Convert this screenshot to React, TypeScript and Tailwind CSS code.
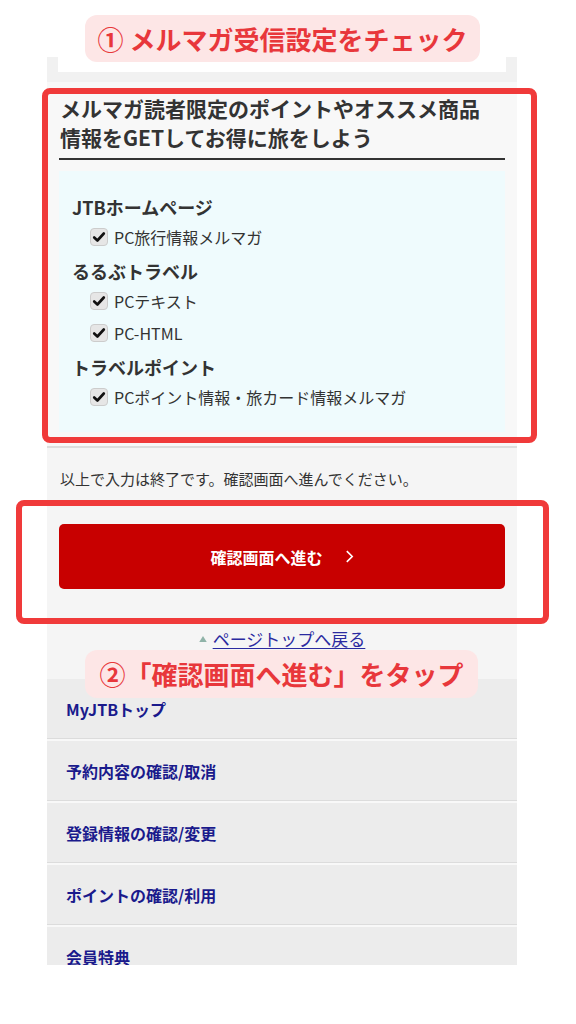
import React from 'react';

const jp = { fontFamily: '"Noto Sans CJK JP", "Noto Sans", sans-serif' };

function CheckBox() {
  return (
    <span className="w-[18px] h-[18px] rounded-[4px] bg-[#e6e6e6] border border-[#cccccc] flex items-center justify-center shrink-0">
      <svg viewBox="0 0 16 16" className="w-[14px] h-[14px]">
        <path d="M2.5 8.5 L6.2 12 L13.5 4" fill="none" stroke="#111" strokeWidth="3" strokeLinecap="round" strokeLinejoin="round" />
      </svg>
    </span>
  );
}

function CheckRow({ label }: { label: string }) {
  return (
    <div className="h-[32px] flex items-center gap-[6px] pl-[18px]">
      <CheckBox />
      <span className="text-[16px] leading-[20px] text-[#333]">{label}</span>
    </div>
  );
}

const groups = [
  { title: 'JTBホームページ', items: ['PC旅行情報メルマガ'] },
  { title: 'るるぶトラベル', items: ['PCテキスト', 'PC-HTML'] },
  { title: 'トラベルポイント', items: ['PCポイント情報・旅カード情報メルマガ'] },
];

const navItems = ['MyJTBトップ', '予約内容の確認/取消', '登録情報の確認/変更', 'ポイントの確認/利用', '会員特典'];

export default function App() {
  return (
    <div className="relative w-[576px] h-[1024px] bg-white overflow-hidden" style={jp}>
      <div className="ml-[47px] w-[470px] flex flex-col">
        {/* bottom edge of previous card */}
        <div className="h-[57px] bg-white" />
        <div className="bg-[#f1f1f1] px-[11px] pb-[10px]">
          <div className="h-[15px] bg-white" />
        </div>

        {/* mail magazine form */}
        <div className="bg-[#f8f8f8] px-[12px] pt-[12px] pb-[14px] border-b-2 border-[#dddddd]">
          <h2 className="text-[21px] leading-[29px] font-bold text-[#333] pl-[1px] pb-[6px] border-b-2 border-[#333]">
            メルマガ読者限定のポイントやオススメ商品
            <br />
            情報をGETしてお得に旅をしよう
          </h2>
          <div className="mt-[11px] bg-[#effbfd] px-[13px] pt-[23px] pb-[19px]">
            {groups.map((g, i) => (
              <div key={g.title} className={i > 0 ? 'mt-[5px]' : ''}>
                <h3 className="text-[18px] leading-[26px] font-bold text-[#333] mb-[1px]">{g.title}</h3>
                {g.items.map((it) => (
                  <CheckRow key={it} label={it} />
                ))}
              </div>
            ))}
          </div>
        </div>

        {/* confirm */}
        <div className="bg-[#f5f5f5] px-[12px] pt-[20px] pb-[30px] flex flex-col">
          <p className="text-[15px] leading-[22px] text-[#333] pl-[1px]">以上で入力は終了です。確認画面へ進んでください。</p>
          <button className="mt-[34px] h-[65px] rounded-[5px] bg-[#c80000] flex items-center justify-center gap-[22px] text-white">
            <span className="text-[16px] font-bold leading-[20px]">確認画面へ進む</span>
            <svg viewBox="0 0 10 16" className="w-[9px] h-[15px]">
              <path d="M2 2 L8 8 L2 14" fill="none" stroke="#fff" strokeWidth="1.8" />
            </svg>
          </button>
          <div className="mt-[40px] flex items-center justify-center gap-[6px] h-[20px]">
            <svg viewBox="0 0 10 8" className="w-[8px] h-[6px]">
              <path d="M5 0 L10 8 L0 8 Z" fill="#8fb3a8" />
            </svg>
            <a className="text-[17px] leading-[20px] text-[#2a2aa0] underline underline-offset-2">ページトップへ戻る</a>
          </div>
        </div>

        {/* nav */}
        <div className="bg-[#ececec] h-[286px] overflow-hidden flex flex-col">
          {navItems.map((n) => (
            <div key={n} className="shrink-0 flex flex-col">
              <div className="h-[59px] flex items-center px-[19px]">
                <span className="text-[16px] leading-[20px] font-bold text-[#1a1a8c]">{n}</span>
              </div>
              <div className="h-[1px] bg-[#dcdcdc]" />
              <div className="h-[2px] bg-[#f8f8f8]" />
            </div>
          ))}
        </div>
      </div>

      {/* annotations */}
      <div className="absolute left-[85px] top-[15px] w-[395px] h-[47px] rounded-[12px] bg-[#fde6e6] flex items-center justify-center">
        <span className="text-[26px] leading-[32px] font-bold text-[#e8373b]">① メルマガ受信設定をチェック</span>
      </div>
      <div className="absolute left-[42px] top-[88px] w-[495px] h-[355px] rounded-[8px] border-[6px] border-[#f03a3a]" />
      <div className="absolute left-[16px] top-[500px] w-[533px] h-[124px] rounded-[8px] border-[6px] border-[#f03a3a]" />
      <div className="absolute left-[85px] top-[650px] w-[393px] h-[48px] rounded-[12px] bg-[#fde6e6] flex items-center justify-center">
        <span className="text-[26px] leading-[32px] font-bold text-[#e8373b]">②「確認画面へ進む」をタップ</span>
      </div>
    </div>
  );
}
